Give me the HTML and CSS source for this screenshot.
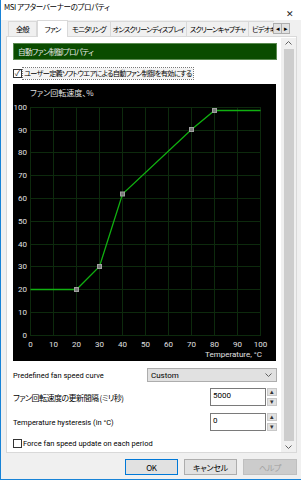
FILE: index.html
```html
<!DOCTYPE html>
<html lang="ja">
<head>
<meta charset="UTF-8">
<title>MSI アフターバーナーのプロパティ</title>
<link rel="stylesheet" href="styles.css">
</head>
<body>
<div class="window">
    <!-- タイトルバー -->
    <div class="titlebar">
        <span class="title jp">MSI アフターバーナーのプロパティ</span>
        <span class="close">✕</span>
    </div>

    <!-- タブ -->
    <div class="tabs jp">
        <div class="tab w-general">全般</div>
        <div class="tab active w-fan">ファン</div>
        <div class="tab w-monitor">モニタリング</div>
        <div class="tab w-osd">オンスクリーンディスプレイ</div>
        <div class="tab w-capture">スクリーンキャプチャ</div>
        <div class="tab w-video">ビデオキ</div>
        <div class="tab-arrows">
            <span class="arrow">◂</span><span class="arrow">▸</span>
        </div>
    </div>

    <div class="panel">
        <div class="content">
            <div class="group-header jp">自動ファン制御プロパティ</div>

            <div class="check-row">
                <span class="checkbox checked">✓</span>
                <span class="focus-label jp">ユーザー定義ソフトウエアによる自動ファン制御を有効にする</span>
            </div>

            <svg class="chart" width="263" height="277" viewBox="0 0 263 277">
                <rect x="0" y="0" width="263" height="277" fill="#000"/>
                <g stroke="#0d2a0d" stroke-width="1">
                    <line x1="17.5" y1="23" x2="17.5" y2="251"/>
                    <line x1="40.5" y1="23" x2="40.5" y2="251"/>
                    <line x1="63.5" y1="23" x2="63.5" y2="251"/>
                    <line x1="86.5" y1="23" x2="86.5" y2="251"/>
                    <line x1="109.5" y1="23" x2="109.5" y2="251"/>
                    <line x1="132.5" y1="23" x2="132.5" y2="251"/>
                    <line x1="155.5" y1="23" x2="155.5" y2="251"/>
                    <line x1="178.5" y1="23" x2="178.5" y2="251"/>
                    <line x1="201.5" y1="23" x2="201.5" y2="251"/>
                    <line x1="224.5" y1="23" x2="224.5" y2="251"/>
                    <line x1="247.5" y1="23" x2="247.5" y2="251"/>
                    <line x1="17" y1="23.5" x2="248" y2="23.5"/>
                    <line x1="17" y1="46.5" x2="248" y2="46.5"/>
                    <line x1="17" y1="68.5" x2="248" y2="68.5"/>
                    <line x1="17" y1="91.5" x2="248" y2="91.5"/>
                    <line x1="17" y1="114.5" x2="248" y2="114.5"/>
                    <line x1="17" y1="137.5" x2="248" y2="137.5"/>
                    <line x1="17" y1="160.5" x2="248" y2="160.5"/>
                    <line x1="17" y1="182.5" x2="248" y2="182.5"/>
                    <line x1="17" y1="205.5" x2="248" y2="205.5"/>
                    <line x1="17" y1="228.5" x2="248" y2="228.5"/>
                    <line x1="17" y1="251.5" x2="248" y2="251.5"/>
                </g>
                <text class="chart-title" x="17" y="12">ファン回転速度、%</text>
                <g class="y-labels" text-anchor="end">
                    <text x="14" y="26">100</text>
                    <text x="14" y="49">90</text>
                    <text x="14" y="71">80</text>
                    <text x="14" y="94">70</text>
                    <text x="14" y="117">60</text>
                    <text x="14" y="140">50</text>
                    <text x="14" y="163">40</text>
                    <text x="14" y="185">30</text>
                    <text x="14" y="208">20</text>
                    <text x="14" y="231">10</text>
                    <text x="14" y="254">0</text>
                </g>
                <g class="x-labels" text-anchor="middle">
                    <text x="17.5" y="263">0</text>
                    <text x="40.5" y="263">10</text>
                    <text x="63.5" y="263">20</text>
                    <text x="86.5" y="263">30</text>
                    <text x="109.5" y="263">40</text>
                    <text x="132.5" y="263">50</text>
                    <text x="155.5" y="263">60</text>
                    <text x="178.5" y="263">70</text>
                    <text x="201.5" y="263">80</text>
                    <text x="224.5" y="263">90</text>
                    <text x="247.5" y="263">100</text>
                </g>
                <text class="axis-name" x="249" y="273" text-anchor="end">Temperature, °C</text>
                <!-- ファンカーブ -->
                <polyline fill="none" stroke="#10b010" stroke-width="1.3" points="17.5,205.5 63.5,205.5 86.5,182.5 109.5,110 178.5,45.5 201.5,26.5 247.5,26.5"/>
                <g fill="#7a7a7a" stroke="#a0a0a0" stroke-width="1">
                    <rect x="61.5" y="203.5" width="4" height="4"/>
                    <rect x="84.5" y="180.5" width="4" height="4"/>
                    <rect x="107.5" y="108" width="4" height="4"/>
                    <rect x="176.5" y="43.5" width="4" height="4"/>
                    <rect x="199.5" y="24.5" width="4" height="4"/>
                </g>
            </svg>

            <div class="form-row first">
                <span class="label">Predefined fan speed curve</span>
                <div class="select">
                    <span>Custom</span>
                    <svg class="chevron" width="7" height="4" viewBox="0 0 7 4"><path d="M0.5 0.5 L3.5 3.5 L6.5 0.5" fill="none" stroke="#606060" stroke-width="1"/></svg>
                </div>
            </div>

            <div class="form-row">
                <span class="label jp">ファン回転速度の更新間隔 (ミリ秒)</span>
                <div class="spin">
                    <span class="spin-value">5000</span>
                    <div class="spin-buttons">
                        <span class="spin-btn">▴</span>
                        <span class="spin-btn">▾</span>
                    </div>
                </div>
            </div>

            <div class="form-row">
                <span class="label">Temperature hysteresis (in °C)</span>
                <div class="spin">
                    <span class="spin-value">0</span>
                    <div class="spin-buttons">
                        <span class="spin-btn">▴</span>
                        <span class="spin-btn">▾</span>
                    </div>
                </div>
            </div>

            <div class="check-row last">
                <span class="checkbox"></span>
                <span class="plain-label">Force fan speed update on each period</span>
            </div>
        </div>

        <!-- スクロールバー -->
        <div class="scrollbar">
            <svg class="sb-arrow" width="7" height="4" viewBox="0 0 7 4"><path d="M0.5 3.5 L3.5 0.5 L6.5 3.5" fill="none" stroke="#606060" stroke-width="1"/></svg>
            <div class="sb-thumb"></div>
            <svg class="sb-arrow" width="7" height="4" viewBox="0 0 7 4"><path d="M0.5 0.5 L3.5 3.5 L6.5 0.5" fill="none" stroke="#606060" stroke-width="1"/></svg>
        </div>
    </div>

    <div class="buttons jp">
        <button class="btn default">OK</button>
        <button class="btn">キャンセル</button>
        <button class="btn disabled">ヘルプ</button>
    </div>
</div>
</body>
</html>
```

FILE: styles.css
```css
html, body{
    margin: 0;
    padding: 0;
    background: #fff;
}
body{
    font-family: Roboto, "Noto Sans CJK JP", sans-serif;
    font-size: 8px;
    color: #000;
}
/* 日本語テキスト: プロポーショナル仮名で幅を詰める */
.jp{
    font-family: "Noto Sans CJK JP", sans-serif;
    font-feature-settings: "palt";
    letter-spacing: -0.7px;
}
.window{
    width: 301px;
    height: 480px;
    box-sizing: border-box;
    border-left: 1px solid #1883d7;
    border-bottom: 1px solid #1883d7;
    background: #f0f0f0;
    display: flex;
    flex-direction: column;
    overflow: hidden;
}
/* タイトルバー */
.titlebar{
    height: 20px;
    background: #fff;
    position: relative;
}
.title{
    position: absolute;
    left: 3px;
    top: 1px;
    font-size: 7.6px;
    line-height: 12px;
    letter-spacing: -0.4px;
}
.close{
    position: absolute;
    right: 7px;
    top: 9px;
    font-size: 9px;
    line-height: 10px;
    color: #222;
}
/* タブ */
.tabs{
    display: flex;
    align-items: flex-end;
    height: 16px;
    padding-left: 7px;
    font-size: 7.2px;
    letter-spacing: -0.8px;
    position: relative;
    z-index: 1;
}
.tab{
    height: 15px;
    box-sizing: border-box;
    border: 1px solid #d9d9d9;
    border-bottom: none;
    border-left: none;
    background: #f0f0f0;
    display: flex;
    align-items: center;
    justify-content: center;
    white-space: nowrap;
    overflow: hidden;
    flex-shrink: 0;
}
.tab:first-child{
    border-left: 1px solid #d9d9d9;
}
.tab.active{
    background: #fff;
    height: 17px;
    border-left: 1px solid #d9d9d9;
    margin-bottom: -1px;
}
.w-general{ width: 29px; }
.w-fan{ width: 31px; }
.w-monitor{ width: 43px; }
.w-osd{ width: 76px; }
.w-capture{ width: 62px; }
.w-video{ width: 25px; justify-content: flex-start; padding-left: 3px; border-right: none; }
.tab-arrows{
    position: absolute;
    left: 272px;
    top: 3px;
    display: flex;
    background: #f0f0f0;
}
.arrow{
    width: 7px;
    height: 9px;
    border: 1px solid #adadad;
    background: #e1e1e1;
    font-size: 7px;
    line-height: 9px;
    letter-spacing: 0;
    text-align: center;
    margin-right: -1px;
}
/* タブページ */
.panel{
    margin: 0 4px 0 5px;
    height: 417px;
    box-sizing: border-box;
    border: 1px solid #d9d9d9;
    background: #fff;
    display: flex;
    padding: 6px 0 0 6px;
}
.content{
    width: 264px;
    display: flex;
    flex-direction: column;
}
.group-header{
    height: 17px;
    box-sizing: border-box;
    background: #0a4c00;
    border: 1px solid #5a8a50;
    color: #e8e8e8;
    font-size: 7.6px;
    line-height: 15px;
    padding-left: 4px;
}
.check-row{
    display: flex;
    align-items: center;
    margin-top: 7px;
    height: 12px;
}
.checkbox{
    width: 9px;
    height: 9px;
    box-sizing: border-box;
    border: 1px solid #333;
    background: #fff;
    font-size: 8px;
    line-height: 7px;
    text-align: center;
    color: #222;
    margin-right: 1px;
}
.focus-label{
    font-size: 7.2px;
    line-height: 11px;
    outline: 1px dotted #777;
    background: #f4f4f4;
    padding: 0 1px;
    white-space: nowrap;
}
.chart{
    display: block;
    margin-top: 5px;
}
.chart text{
    fill: #e0e0e0;
    font-family: Roboto, sans-serif;
    font-size: 8px;
}
.chart .chart-title{
    font-family: "Noto Sans CJK JP", sans-serif;
    font-feature-settings: "palt";
    font-size: 8px;
}
/* 設定項目 */
.form-row{
    display: flex;
    align-items: center;
    justify-content: space-between;
    margin-top: 7px;
    height: 18px;
}
.form-row.first{
    margin-top: 7px;
    height: 14px;
    margin-bottom: -1px;
}
.label{
    white-space: nowrap;
    font-size: 7.5px;
}
.label.jp{
    font-size: 8px;
    letter-spacing: -0.55px;
}
.select{
    width: 130px;
    height: 14px;
    box-sizing: border-box;
    background: #e1e1e1;
    border: 1px solid #adadad;
    display: flex;
    align-items: center;
    justify-content: space-between;
    padding: 0 4px 0 3px;
    font-size: 8px;
}
.spin{
    display: flex;
    height: 18px;
}
.spin-value{
    width: 56px;
    box-sizing: border-box;
    border: 1px solid #7a7a7a;
    background: #fff;
    font-size: 8px;
    line-height: 14px;
    padding-left: 2px;
}
.spin-buttons{
    width: 10px;
    display: flex;
    flex-direction: column;
    justify-content: space-between;
    margin-left: 1px;
}
.spin-btn{
    height: 8px;
    background: #e1e1e1;
    border: 1px solid #c8c8c8;
    box-sizing: border-box;
    font-size: 7px;
    line-height: 6px;
    text-align: center;
    color: #333;
}
.check-row.last{
    margin-top: 6px;
}
.plain-label{
    font-size: 7.5px;
    white-space: nowrap;
}
/* スクロールバー */
.scrollbar{
    width: 15px;
    margin-left: 4px;
    margin-top: -5px;
    background: #f0f0f0;
    display: flex;
    flex-direction: column;
    align-items: center;
    padding: 3px 0;
    gap: 4px;
}
.sb-arrow{
    flex-shrink: 0;
}
.sb-thumb{
    width: 10px;
    flex: 1;
    background: #cdcdcd;
}
/* ボタン */
.buttons{
    display: flex;
    justify-content: flex-end;
    gap: 6px;
    padding: 6px 4px 0 0;
}
.btn{
    height: 16px;
    width: 53px;
    box-sizing: border-box;
    border: 1px solid #adadad;
    background: #e1e1e1;
    font-family: "Noto Sans CJK JP", sans-serif;
    font-feature-settings: "palt";
    font-size: 8px;
    letter-spacing: -0.3px;
    padding: 0;
    color: #000;
}
.btn.default{
    border: 1px solid #0078d7;
}
.btn.disabled{
    width: 54px;
    color: #a0a0a0;
    background: #cccccc;
    border-color: #bfbfbf;
}
```
